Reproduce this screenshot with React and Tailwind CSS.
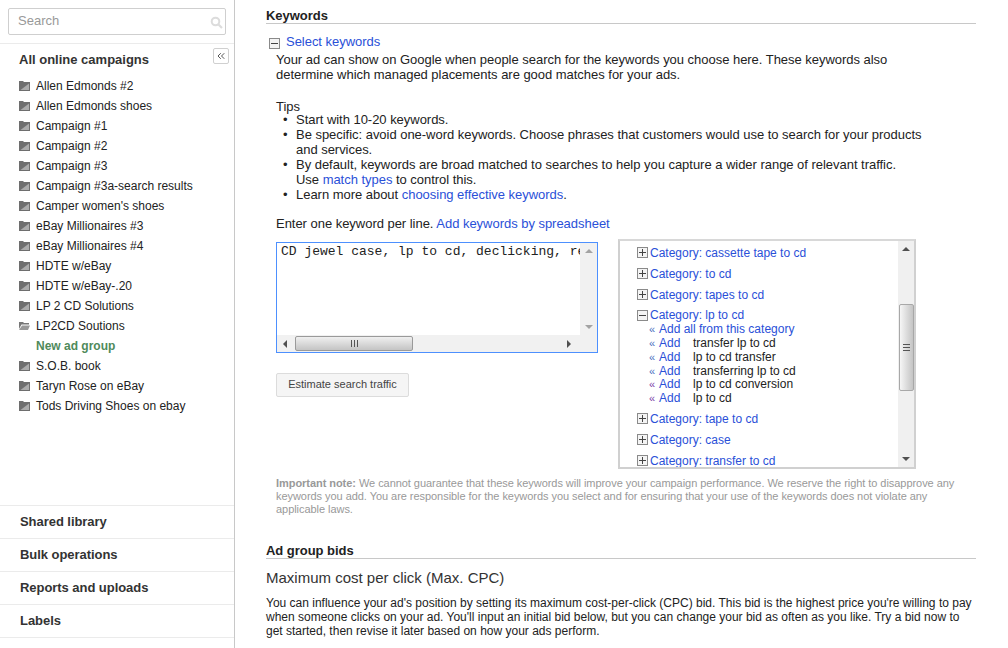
import { ChevronsLeft } from 'lucide-react'

const campaigns = [
  'Allen Edmonds #2',
  'Allen Edmonds shoes',
  'Campaign #1',
  'Campaign #2',
  'Campaign #3',
  'Campaign #3a-search results',
  "Camper women's shoes",
  'eBay Millionaires #3',
  'eBay Millionaires #4',
  'HDTE w/eBay',
  'HDTE w/eBay-.20',
  'LP 2 CD Solutions',
  'LP2CD Soutions',
  'New ad group',
  'S.O.B. book',
  'Taryn Rose on eBay',
  'Tods Driving Shoes on ebay',
]

const bottomLinks = ['Shared library', 'Bulk operations', 'Reports and uploads', 'Labels']

function FolderIcon({ open }) {
  if (open) {
    return (
      <svg width="11" height="10" viewBox="0 0 11 10" className="shrink-0">
        <path d="M0 1h4l1 1h5v1.5H2.5L0 8z" fill="#777" />
        <path d="M3 4.5h8L9 9H0z" fill="#999" />
      </svg>
    )
  }
  return (
    <svg width="11" height="10" viewBox="0 0 11 10" className="shrink-0">
      <path d="M0 0h4l1 1h6v9H0z" fill="#6e6e6e" />
      <path d="M1.5 9L10 2.5V9z" fill="#ababab" />
    </svg>
  )
}

function TreeBox({ minus }) {
  return (
    <span className="flex h-[11px] w-[11px] shrink-0 items-center justify-center border border-[#8a8a8a] bg-[#f4f4f4]">
      <svg width="9" height="9" viewBox="0 0 9 9">
        <path d={minus ? 'M1 4.5h7' : 'M1 4.5h7M4.5 1v7'} stroke="#444" strokeWidth="1" fill="none" />
      </svg>
    </span>
  )
}

function Category({ name, minus, className = 'h-[21px]' }) {
  return (
    <div className={`flex items-center gap-[2px] text-[#2a50d8] ${className}`}>
      <TreeBox minus={minus} />
      <span>Category: {name}</span>
    </div>
  )
}

function AddRow({ text, className = 'h-[14px]', visited }) {
  return (
    <div className={`flex items-center pl-[12px] ${className}`}>
      <span className={`w-[10px] text-[11px] ${visited ? 'text-[#7b3fa8]' : 'text-[#4a6fc0]'}`}>«</span>
      <span className="w-[34px] text-[#2a50d8]">Add</span>
      <span className="text-[#222]">{text}</span>
    </div>
  )
}

function Sidebar() {
  return (
    <aside className="flex h-[648px] w-[235px] shrink-0 flex-col border-r border-[#c8c8c8] text-[12px] text-[#222]">
      <div className="h-[44px] shrink-0 border-b border-[#ebebeb] px-[8px] pt-[8px]">
        <div className="flex h-[27px] items-center justify-between rounded-[2px] border border-[#cfcfcf] pb-[2px] pl-[9px] pr-[2px] text-[13px] text-[#999]">
          <span>Search</span>
          <svg width="13" height="13" viewBox="0 0 13 13" className="mt-[4px]">
            <circle cx="5.5" cy="5.5" r="3.8" stroke="#dcdcdc" strokeWidth="2" fill="none" />
            <path d="M8.5 8.5l3.5 3.5" stroke="#dcdcdc" strokeWidth="2.2" />
          </svg>
        </div>
      </div>
      <div className="relative flex-1">
        <button className="absolute right-[5px] top-[4px] flex h-[16px] w-[16px] items-center justify-center rounded-[2px] border border-[#d0d0d0] bg-white text-[#555]">
          <ChevronsLeft size={12} strokeWidth={2} />
        </button>
        <h2 className="pl-[19px] pt-[8px] text-[13px] leading-[16px] font-bold text-[#333]">All online campaigns</h2>
        <ul className="mt-[8px]">
          {campaigns.map((name) => (
            <li key={name} className="flex h-[20px] items-center gap-[6px] pl-[19px]">
              {name === 'New ad group' ? (
                <span className="pl-[17px] font-bold text-[#4f8a5b]">{name}</span>
              ) : (
                <>
                  <FolderIcon open={name === 'LP2CD Soutions'} />
                  <span>{name}</span>
                </>
              )}
            </li>
          ))}
        </ul>
      </div>
      <nav className="mb-[10px] shrink-0 border-t border-[#ebebeb]">
        {bottomLinks.map((label) => (
          <div key={label} className="flex h-[33px] items-center border-b border-[#ebebeb] pl-[20px] text-[13px] font-bold tracking-[-0.05px] text-[#333]">
            {label}
          </div>
        ))}
      </nav>
    </aside>
  )
}

function KeywordInput() {
  return (
    <div className="flex h-[111px] w-[322px] flex-col border border-[#4d90fe]">
      <div className="flex min-h-0 flex-1">
        <div className="min-w-0 flex-1 overflow-hidden whitespace-nowrap pl-[4px] pt-[1px] text-[13px] leading-[15px] tracking-normal text-[#222] [font-family:'Liberation_Mono',monospace]">
          CD jewel case, lp to cd, declicking, re
        </div>
        <div className="flex w-[17px] shrink-0 flex-col items-center justify-between bg-[#f1f1f1] py-[6px]">
          <span className="h-0 w-0 border-x-[4px] border-b-[4px] border-x-transparent border-b-[#a3a3a3]" />
          <span className="h-0 w-0 border-x-[4px] border-t-[4px] border-x-transparent border-t-[#a3a3a3]" />
        </div>
      </div>
      <div className="flex h-[17px] shrink-0 items-center bg-[#f1f1f1]">
        <span className="ml-[6px] h-0 w-0 border-y-[4px] border-r-[4px] border-y-transparent border-r-[#505050]" />
        <div className="ml-[8px] flex h-[15px] w-[118px] items-center justify-center rounded-[2px] border border-[#9a9a9a] bg-gradient-to-b from-[#f0f0f0] to-[#c4c4c4]">
          <svg width="7" height="7" viewBox="0 0 7 7">
            <path d="M0.5 0v7M3.5 0v7M6.5 0v7" stroke="#555" strokeWidth="1" />
          </svg>
        </div>
        <span className="ml-[154px] h-0 w-0 border-y-[4px] border-l-[4px] border-y-transparent border-l-[#505050]" />
      </div>
    </div>
  )
}

function CategoryList() {
  return (
    <div className="flex h-[230px] w-[298px] overflow-hidden border-2 border-[#d0d0d0] border-t-[#d8d8d8]">
      <div className="min-w-0 flex-1 overflow-hidden pl-[17px] pt-[1px] text-[12px] leading-[14px] tracking-normal">
        <Category name="cassette tape to cd" />
        <Category name="to cd" />
        <Category name="tapes to cd" />
        <Category name="lp to cd" minus className="mb-[-3px] h-[20px]" />
        <div className="flex h-[14px] items-center pl-[12px] text-[#2a50d8]">
          <span className="w-[10px] text-[11px] text-[#4a6fc0]">«</span>
          <span>Add all from this category</span>
        </div>
        <AddRow text="transfer lp to cd" />
        <AddRow text="lp to cd transfer" />
        <AddRow text="transferring lp to cd" />
        <AddRow text="lp to cd conversion" visited className="mt-[-1px] h-[14px]" />
        <AddRow text="lp to cd" visited />
        <Category name="tape to cd" className="mt-[3px] h-[21px]" />
        <Category name="case" />
        <Category name="transfer to cd" />
      </div>
      <div className="flex w-[16px] shrink-0 flex-col items-center bg-[#f0f0f0]">
        <span className="mt-[6px] h-0 w-0 border-x-[4px] border-b-[4px] border-x-transparent border-b-[#505050]" />
        <div className="mt-[53px] flex h-[87px] w-[15px] items-center justify-center rounded-[2px] border border-[#a8a8a8] bg-gradient-to-r from-[#f6f6f6] to-[#c4c4c4]">
          <svg width="7" height="7" viewBox="0 0 7 7">
            <path d="M0 0.5h7M0 3.5h7M0 6.5h7" stroke="#555" strokeWidth="1" />
          </svg>
        </div>
        <span className="mt-[66px] h-0 w-0 border-x-[4px] border-t-[4px] border-x-transparent border-t-[#505050]" />
      </div>
    </div>
  )
}

export default function App() {
  return (
    <div className="flex h-[648px] w-[1008px] overflow-hidden bg-white font-['Liberation_Sans',Arial,sans-serif]">
      <Sidebar />
      <main className="w-[741px] pl-[31px] text-[13px] tracking-[-0.03px] text-[#222]">
        <h3 className="mt-[8px] h-[16px] border-b border-[#c8c8c8] text-[13px] leading-[15px] font-bold text-[#222]">Keywords</h3>

        <div className="mt-[10px] pl-[3px]">
          <div className="flex h-[15px] items-center gap-[6px]">
            <span className="mt-[4px]"><TreeBox minus /></span>
            <span className="text-[#2a50d8]">Select keywords</span>
          </div>
          <div className="pl-[7px] leading-[15px]">
            <p className="mt-[3px]">
              Your ad can show on Google when people search for the keywords you choose here. These keywords also
              <br />
              determine which managed placements are good matches for your ads.
            </p>
            <p className="mt-[17px]">Tips</p>
            <ul className="mt-[-2px] w-[660px]">
              <li className="flex"><span className="w-[20px] pl-[7px]">•</span>Start with 10-20 keywords.</li>
              <li className="flex">
                <span className="w-[20px] shrink-0 pl-[7px]">•</span>
                <span>Be specific: avoid one-word keywords. Choose phrases that customers would use to search for your products and services.</span>
              </li>
              <li className="flex">
                <span className="w-[20px] shrink-0 pl-[7px]">•</span>
                <span>
                  By default, keywords are broad matched to searches to help you capture a wider range of relevant traffic.
                  <br />
                  Use <span className="text-[#2a50d8]">match types</span> to control this.
                </span>
              </li>
              <li className="flex">
                <span className="w-[20px] shrink-0 pl-[7px]">•</span>
                <span>Learn more about <span className="text-[#2a50d8]">choosing effective keywords</span>.</span>
              </li>
            </ul>
            <p className="mt-[14px]">
              Enter one keyword per line. <span className="text-[#2a50d8]">Add keywords by spreadsheet</span>
            </p>
          </div>
        </div>

        <div className="mt-[8px] flex items-start gap-[20px] pl-[10px]">
          <div className="pt-[3px]">
            <KeywordInput />
            <button className="mt-[20px] h-[24px] w-[133px] rounded-[2px] border border-[#dcdcdc] bg-[#f5f5f5] pb-[1px] text-[11px] tracking-normal text-[#444]">
              Estimate search traffic
            </button>
          </div>
          <CategoryList />
        </div>

        <p className="mt-[8px] w-[690px] pl-[10px] text-[11px] leading-[13px] tracking-[-0.05px] text-[#999]">
          <span className="font-bold">Important note:</span> We cannot guarantee that these keywords will improve your campaign performance. We reserve the right to disapprove any keywords you add. You are responsible for the keywords you select and for ensuring that your use of the keywords does not violate any applicable laws.
        </p>

        <h3 className="mt-[27px] h-[16px] border-b border-[#c8c8c8] text-[13px] leading-[15px] font-bold text-[#222]">Ad group bids</h3>
        <h4 className="mt-[10px] text-[15px] leading-[18px] font-normal tracking-normal text-[#333]">Maximum cost per click (Max. CPC)</h4>
        <p className="mt-[9px] w-[710px] text-[12px] leading-[14px] tracking-normal">
          You can influence your ad's position by setting its maximum cost-per-click (CPC) bid. This bid is the highest price you're willing to pay when someone clicks on your ad. You'll input an initial bid below, but you can change your bid as often as you like. Try a bid now to get started, then revise it later based on how your ads perform.
        </p>
      </main>
    </div>
  )
}
